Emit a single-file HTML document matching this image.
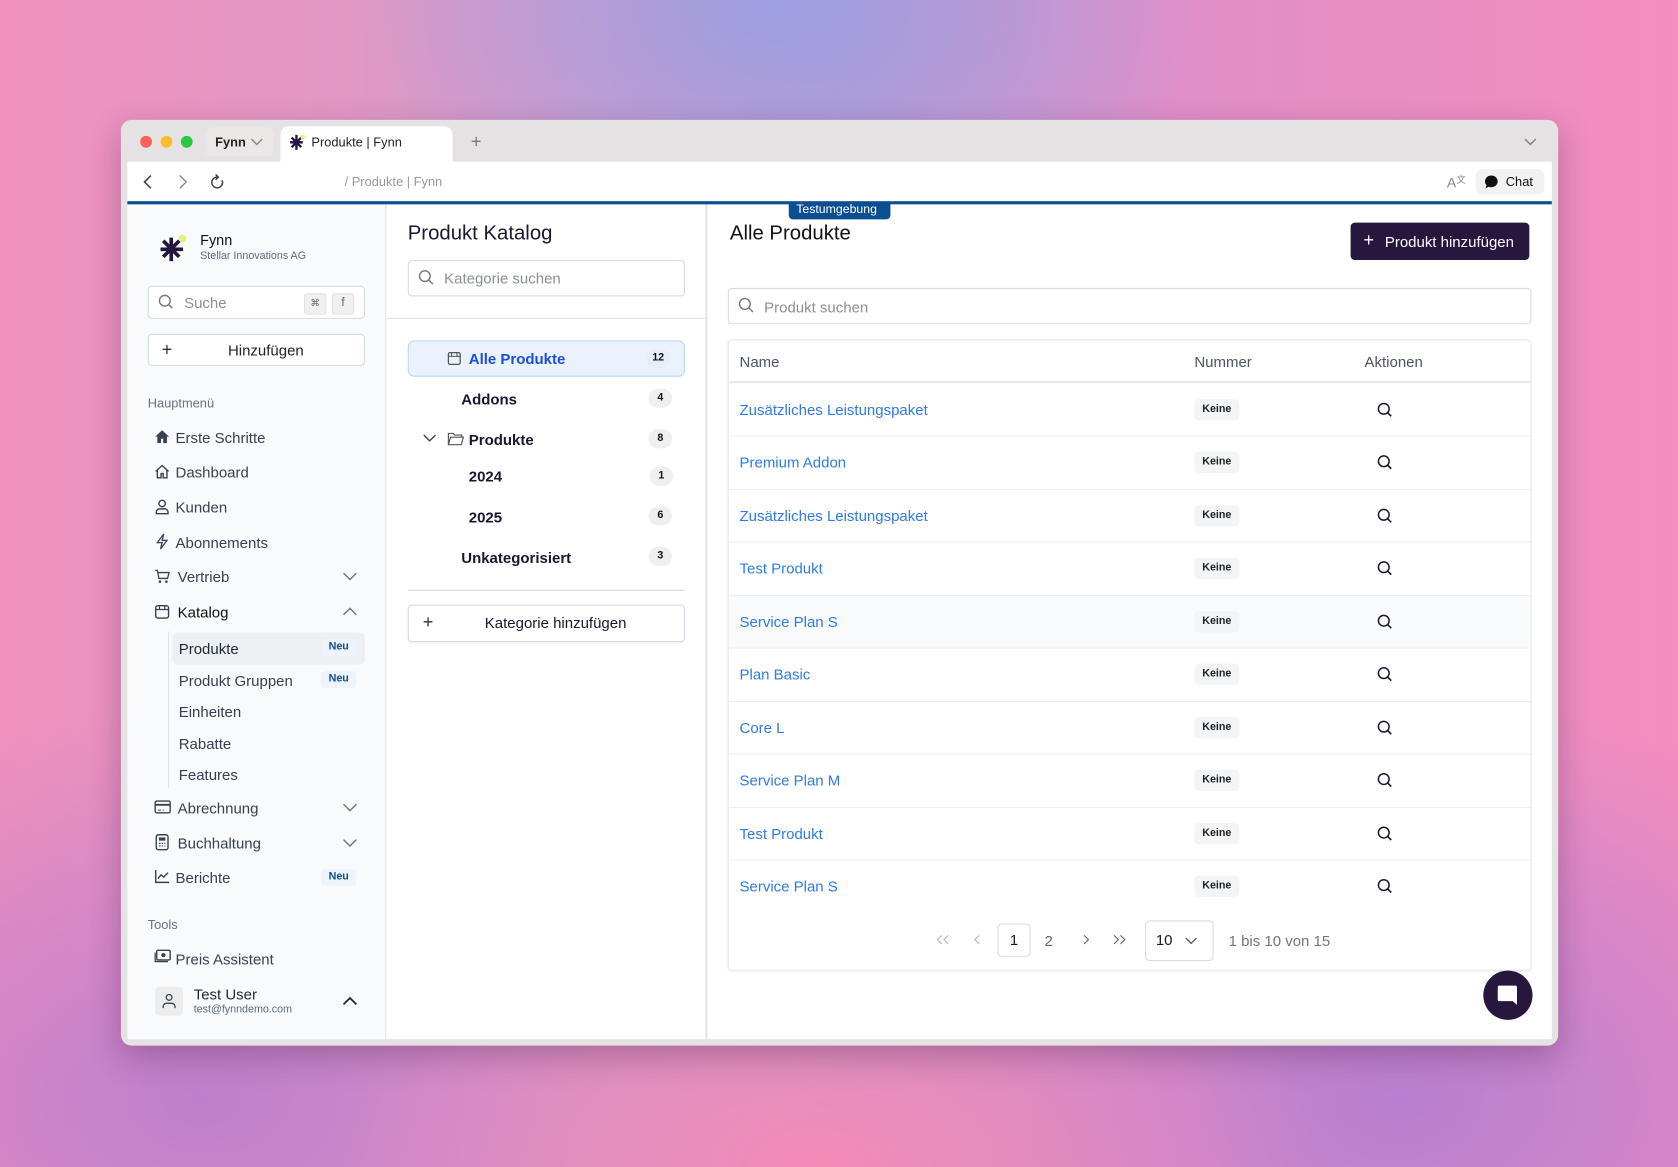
<!DOCTYPE html>
<html><head><meta charset="utf-8"><style>
*{box-sizing:border-box;margin:0;padding:0}
html,body{width:1678px;height:1167px;overflow:hidden}
body{font-family:"Liberation Sans",sans-serif;background:
radial-gradient(ellipse 420px 260px at 780px 10px,#9d9ee0 0%,rgba(157,158,224,0) 100%),
radial-gradient(ellipse 500px 300px at 820px 1167px,#f58ab5 0%,rgba(245,138,181,0) 100%),
radial-gradient(ellipse 600px 400px at 1400px 1100px,#b87fd0 0%,rgba(184,127,208,0) 100%),
radial-gradient(ellipse 600px 400px at 200px 1100px,#c07fcc 0%,rgba(192,127,204,0) 100%),
linear-gradient(90deg,#f291bd 0%,#d49ccb 35%,#c39ad3 50%,#e08fc8 70%,#f58dbf 100%);}
#s{position:absolute;left:0;top:0;width:1568px;height:1090px;transform:scale(1.0702);transform-origin:0 0}
.a{position:absolute}
.win{left:113px;top:112px;width:1343px;height:865px;background:#e4e2e3;border-radius:10px;box-shadow:0 10px 30px rgba(60,20,60,.3)}
.t{position:absolute;white-space:nowrap;line-height:1}
.side{left:119px;top:191px;width:242px;height:780px;background:#f9fafb;border-right:1px solid #dfe2e8}
.mid{left:361px;top:191px;width:299px;height:780px;background:#fff;border-right:1px solid #dfe2e8}
.main{left:661px;top:191px;width:789px;height:780px;background:#fff}
.mi{font-size:14px;color:#374151}
.neu{position:absolute;width:33px;height:16px;background:#eef4fd;color:#0b4f91;font-weight:bold;font-size:10px;text-align:center;line-height:16px;border-radius:4px}
.cnt{position:absolute;width:22px;height:18px;border-radius:9px;background:#efefef;font-size:10px;font-weight:bold;text-align:center;line-height:18px;color:#111}
.box{position:absolute;border:1px solid #d5dae3;border-radius:4px;background:#fff}
.lnk{font-size:14px;color:#2f7be5}
.kn{position:absolute;left:1116px;width:42px;height:20px;background:#f3f4f6;border-radius:4px;font-size:10px;font-weight:bold;text-align:center;line-height:20px;color:#222}
.row{position:absolute;left:681px;width:749px;height:1px;background:#eceef2}
svg{position:absolute}
</style></head><body><div id="s">
<div class="a win"></div>
<!-- tab bar -->
<div class="a" style="left:131px;top:127px;width:11px;height:11px;border-radius:50%;background:#fe5f57"></div>
<div class="a" style="left:150px;top:127px;width:11px;height:11px;border-radius:50%;background:#febc2e"></div>
<div class="a" style="left:169px;top:127px;width:11px;height:11px;border-radius:50%;background:#28c840"></div>
<div class="a" style="left:192px;top:119px;width:64px;height:27px;background:#ece7e6;border-radius:6px"></div>
<div class="t" style="left:201px;top:127px;font-size:12px;font-weight:bold;color:#222">Fynn</div>
<svg style="left:234px;top:128px" width="12" height="10"><path d="M1 2l5 5 5-5" stroke="#888" fill="none" stroke-width="1.3"/></svg>
<div class="a" style="left:262px;top:118px;width:161px;height:34px;background:#fff;border-radius:8px 8px 0 0"></div>
<svg style="left:270px;top:125px" width="16" height="16"><g stroke="#24173f" stroke-width="2.2"><path d="M7 1v14M1 8h12M2.5 3.5l9 9M11.5 3.5l-9 9"/></g><circle cx="13" cy="3" r="2.2" fill="#e6ef7a"/></svg>
<div class="t" style="left:291px;top:127px;font-size:12px;color:#222">Produkte | Fynn</div>
<div class="t" style="left:440px;top:124px;font-size:17px;color:#777">+</div>
<svg style="left:1424px;top:128px" width="12" height="9"><path d="M1 2l5 5 5-5" stroke="#777" fill="none" stroke-width="1.2"/></svg>
<!-- toolbar -->
<div class="a" style="left:119px;top:151px;width:1331px;height:37px;background:#fff"></div>
<svg style="left:132px;top:163px" width="12" height="14"><path d="M9 1L3 7l6 6" stroke="#444" fill="none" stroke-width="1.5"/></svg>
<svg style="left:165px;top:163px" width="12" height="14"><path d="M3 1l6 6-6 6" stroke="#888" fill="none" stroke-width="1.3"/></svg>
<svg style="left:196px;top:162px" width="15" height="16"><path d="M11.5 6.5A5 5 0 1 1 7 3.5" stroke="#444" fill="none" stroke-width="1.4"/><path d="M5.5 1l2.5 2.5-2.5 2.5" stroke="#444" fill="none" stroke-width="1.4"/></svg>
<div class="t" style="left:322px;top:164px;font-size:12px;color:#9a9a9a">/ Produkte | Fynn</div>
<div class="t" style="left:1352px;top:164px;font-size:13px;color:#888">A<span style="font-size:9px;vertical-align:top">文</span></div>
<div class="a" style="left:1379px;top:158px;width:64px;height:24px;background:#f2f2f2;border-radius:6px"></div>
<svg style="left:1387px;top:163px" width="14" height="14"><path d="M7 1a6 5.5 0 1 1-3 10.5L1 13l1-3A6 5.5 0 0 1 7 1z" fill="#111"/></svg>
<div class="t" style="left:1407px;top:164px;font-size:12px;color:#111">Chat</div>
<div class="a" style="left:119px;top:188px;width:1331px;height:3px;background:#0b4f91"></div>
<!-- panels -->
<div class="a side"></div>
<div class="a mid"></div>
<div class="a main"></div>
<div class="a" style="left:737px;top:189px;width:95px;height:16px;background:#0b4f91;border-radius:0 0 4px 4px"></div>
<div class="t" style="left:744px;top:191px;font-size:11.5px;color:#fff">Testumgebung</div>
<!-- sidebar -->
<svg style="left:148px;top:218px" width="28" height="28"><g stroke="#24173f" stroke-width="3.4"><path d="M12 4v22M2 15h21M4.5 7l15 15M19.5 7l-15 15"/></g><circle cx="22.5" cy="5" r="3.6" fill="#e6ef7a"/></svg>
<div class="t" style="left:187px;top:218px;font-size:13.5px;color:#111">Fynn</div>
<div class="t" style="left:187px;top:235px;font-size:10px;color:#5b6b86">Stellar Innovations AG</div>
<div class="box" style="left:138px;top:267px;width:203px;height:31px"></div>
<svg style="left:148px;top:275px" width="14" height="14"><circle cx="6" cy="6" r="5" stroke="#777" fill="none" stroke-width="1.3"/><path d="M9.5 9.5l3.5 3.5" stroke="#777" stroke-width="1.3"/></svg>
<div class="t" style="left:172px;top:276px;font-size:14px;color:#8a8f98">Suche</div>
<div class="a" style="left:284px;top:274px;width:21px;height:20px;background:#f0f0f0;border:1px solid #e2e2e2;border-radius:3px;font-size:9px;text-align:center;line-height:17px;color:#666">⌘</div>
<div class="a" style="left:310px;top:274px;width:21px;height:20px;background:#f0f0f0;border:1px solid #e2e2e2;border-radius:3px;font-size:11px;text-align:center;line-height:17px;color:#666">f</div>
<div class="box" style="left:138px;top:312px;width:203px;height:30px"></div>
<div class="t" style="left:151px;top:318px;font-size:17px;color:#333">+</div>
<div class="t" style="left:213px;top:320px;font-size:14px;color:#222">Hinzufügen</div>
<div class="t" style="left:138px;top:371px;font-size:12px;color:#6b7280">Hauptmenü</div>
<svg style="left:144px;top:401px" width="15" height="14"><path d="M7.5 1L1 7h2v6h3.5V9h2v4H12V7h2z" fill="#374151"/></svg>
<div class="t mi" style="left:164px;top:402px">Erste Schritte</div>
<svg style="left:144px;top:433px" width="15" height="15"><path d="M1.5 7.5L7.5 2l6 5.5M3 6v7.5h3.5v-4h2v4H12V6" stroke="#374151" fill="none" stroke-width="1.3"/></svg>
<div class="t mi" style="left:164px;top:434px">Dashboard</div>
<svg style="left:144px;top:466px" width="15" height="15"><circle cx="7.5" cy="4.5" r="3" stroke="#374151" fill="none" stroke-width="1.3"/><path d="M2 14v-1.5a3 3 0 0 1 3-3h5a3 3 0 0 1 3 3V14z" stroke="#374151" fill="none" stroke-width="1.3"/></svg>
<div class="t mi" style="left:164px;top:467px">Kunden</div>
<svg style="left:144px;top:498px" width="15" height="16"><path d="M9 1L3 9h4.5L6 15l6-8H7.5z" stroke="#374151" fill="none" stroke-width="1.2"/></svg>
<div class="t mi" style="left:164px;top:500px">Abonnements</div>
<svg style="left:144px;top:531px" width="15" height="15"><path d="M1 2h2l1.5 7.5h8L14 4H4" stroke="#374151" fill="none" stroke-width="1.2"/><circle cx="5.5" cy="12.5" r="1.2" fill="#374151"/><circle cx="11.5" cy="12.5" r="1.2" fill="#374151"/></svg>
<div class="t mi" style="left:166px;top:532px">Vertrieb</div>
<svg style="left:320px;top:534px" width="14" height="9"><path d="M1 1.5l6 6 6-6" stroke="#6b7280" fill="none" stroke-width="1.3"/></svg>
<svg style="left:144px;top:564px" width="15" height="15"><rect x="1.5" y="2" width="12" height="11.5" rx="2" stroke="#374151" fill="none" stroke-width="1.3"/><path d="M1.5 5.5h12M5 2v3.5M10 2v3.5" stroke="#374151" stroke-width="1.1"/></svg>
<div class="t mi" style="left:166px;top:565px;color:#111">Katalog</div>
<svg style="left:320px;top:567px" width="14" height="9"><path d="M1 7.5l6-6 6 6" stroke="#6b7280" fill="none" stroke-width="1.3"/></svg>
<div class="a" style="left:157px;top:590px;width:1px;height:146px;background:#dfe2e8"></div>
<div class="a" style="left:161px;top:591px;width:180px;height:30px;background:#eeeff2;border-radius:5px"></div>
<div class="t mi" style="left:167px;top:599px;color:#1f2937">Produkte</div>
<div class="neu" style="left:300px;top:597px">Neu</div>
<div class="t mi" style="left:167px;top:629px">Produkt Gruppen</div>
<div class="neu" style="left:300px;top:627px">Neu</div>
<div class="t mi" style="left:167px;top:658px">Einheiten</div>
<div class="t mi" style="left:167px;top:688px">Rabatte</div>
<div class="t mi" style="left:167px;top:717px">Features</div>
<svg style="left:144px;top:747px" width="16" height="14"><rect x="1" y="1.5" width="14" height="11" rx="1.5" stroke="#374151" fill="none" stroke-width="1.3"/><path d="M1 5h14" stroke="#374151" stroke-width="1.8"/><path d="M3.5 10h3M8 10h1" stroke="#374151" stroke-width="1"/></svg>
<div class="t mi" style="left:166px;top:748px">Abrechnung</div>
<svg style="left:320px;top:750px" width="14" height="9"><path d="M1 1.5l6 6 6-6" stroke="#6b7280" fill="none" stroke-width="1.3"/></svg>
<svg style="left:145px;top:779px" width="13" height="16"><rect x="1" y="1" width="11" height="14" rx="2" stroke="#374151" fill="none" stroke-width="1.3"/><rect x="3.5" y="3.5" width="6" height="3" fill="#374151"/><path d="M3.5 9h1.5M6 9h1.5M8.5 9h1M3.5 11.5h1.5M6 11.5h1.5M8.5 11.5h1" stroke="#374151"/></svg>
<div class="t mi" style="left:166px;top:781px">Buchhaltung</div>
<svg style="left:320px;top:783px" width="14" height="9"><path d="M1 1.5l6 6 6-6" stroke="#6b7280" fill="none" stroke-width="1.3"/></svg>
<svg style="left:144px;top:812px" width="15" height="14"><path d="M1.5 1v11.5H14" stroke="#374151" fill="none" stroke-width="1.3"/><path d="M3.5 9l3-3.5 2.5 2 4-4" stroke="#374151" fill="none" stroke-width="1.3"/></svg>
<div class="t mi" style="left:164px;top:813px">Berichte</div>
<div class="neu" style="left:300px;top:812px">Neu</div>
<div class="t" style="left:138px;top:858px;font-size:12px;color:#6b7280">Tools</div>
<svg style="left:144px;top:887px" width="16" height="13"><rect x="2.5" y="1" width="12.5" height="9" rx="1" stroke="#374151" fill="none" stroke-width="1.3"/><circle cx="8.7" cy="5.5" r="2" fill="#374151"/><path d="M1 3v8.5h12" stroke="#374151" fill="none" stroke-width="1.2"/></svg>
<div class="a" style="left:119px;top:887px;width:242px;height:17px;overflow:hidden"><div class="t mi" style="left:45px;top:2px">Preis Assistent</div></div>
<div class="a" style="left:145px;top:922px;width:26px;height:27px;background:#ececec;border-radius:4px"></div>
<svg style="left:150px;top:928px" width="16" height="15"><circle cx="8" cy="4" r="2.7" stroke="#374151" fill="none" stroke-width="1.2"/><path d="M2.5 14v-1.5a3 3 0 0 1 3-3h5a3 3 0 0 1 3 3V14" stroke="#374151" fill="none" stroke-width="1.2"/></svg>
<div class="t" style="left:181px;top:922px;font-size:14px;color:#1f2937">Test User</div>
<div class="t" style="left:181px;top:939px;font-size:10px;color:#5b6b86">test@fynndemo.com</div>
<svg style="left:320px;top:931px" width="14" height="9"><path d="M1 7.5l6-6 6 6" stroke="#222" fill="none" stroke-width="1.6"/></svg>
<!-- middle -->
<div class="t" style="left:381px;top:209px;font-size:19px;color:#1c1530">Produkt Katalog</div>
<div class="box" style="left:381px;top:243px;width:259px;height:34px"></div>
<svg style="left:391px;top:252px" width="15" height="15"><circle cx="6" cy="6" r="5" stroke="#777" fill="none" stroke-width="1.3"/><path d="M9.5 9.5l4 4" stroke="#777" stroke-width="1.3"/></svg>
<div class="t" style="left:415px;top:253px;font-size:14px;color:#8a8f98">Kategorie suchen</div>
<div class="a" style="left:361px;top:297px;width:299px;height:1px;background:#dfe2e8"></div>
<div class="a" style="left:381px;top:318px;width:259px;height:34px;background:#eaf2fd;border:1px solid #b9d3f5;border-radius:6px"></div>
<svg style="left:418px;top:328px" width="13" height="14"><rect x="1" y="1.5" width="11" height="11" rx="1.5" stroke="#555" fill="none" stroke-width="1.2"/><path d="M1 5h11M4 1.5V5M9 1.5V5" stroke="#555" stroke-width="1"/></svg>
<div class="t" style="left:438px;top:328px;font-size:14px;color:#1d4ed8;font-weight:bold">Alle Produkte</div>
<div class="cnt" style="left:604px;top:326px;background:#e8eef7">12</div>
<div class="t" style="left:431px;top:366px;font-size:14px;color:#1c1530;font-weight:bold">Addons</div>
<div class="cnt" style="left:606px;top:363px">4</div>
<svg style="left:395px;top:405px" width="13" height="9"><path d="M1 1.5l5.5 5.5 5.5-5.5" stroke="#444" fill="none" stroke-width="1.3"/></svg>
<svg style="left:418px;top:403px" width="16" height="14"><path d="M1 12.5V2h4.5l1.5 1.5h6.5v2M1 12.5l2-7h12l-2 7z" stroke="#555" fill="none" stroke-width="1.1"/></svg>
<div class="t" style="left:438px;top:404px;font-size:14px;color:#1c1530;font-weight:bold">Produkte</div>
<div class="cnt" style="left:606px;top:401px">8</div>
<div class="t" style="left:438px;top:438px;font-size:14px;color:#1c1530;font-weight:bold">2024</div>
<div class="cnt" style="left:607px;top:436px">1</div>
<div class="t" style="left:438px;top:476px;font-size:14px;color:#1c1530;font-weight:bold">2025</div>
<div class="cnt" style="left:606px;top:473px">6</div>
<div class="t" style="left:431px;top:514px;font-size:14px;color:#1c1530;font-weight:bold">Unkategorisiert</div>
<div class="cnt" style="left:606px;top:511px">3</div>
<div class="a" style="left:381px;top:551px;width:259px;height:1px;background:#cfd4dc"></div>
<div class="box" style="left:381px;top:565px;width:259px;height:35px;box-shadow:0 1px 2px rgba(0,0,0,.05)"></div>
<div class="t" style="left:395px;top:573px;font-size:17px;color:#333">+</div>
<div class="t" style="left:453px;top:575px;font-size:14px;color:#1c1530">Kategorie hinzufügen</div>
<!-- main -->
<div class="t" style="left:682px;top:209px;font-size:19px;color:#111">Alle Produkte</div>
<div class="a" style="left:1262px;top:208px;width:167px;height:35px;background:#27173f;border-radius:4px"></div>
<div class="t" style="left:1274px;top:216px;font-size:17px;color:#fff">+</div>
<div class="t" style="left:1294px;top:219px;font-size:14px;color:#fff">Produkt hinzufügen</div>
<div class="box" style="left:680px;top:269px;width:751px;height:34px"></div>
<svg style="left:690px;top:278px" width="15" height="15"><circle cx="6" cy="6" r="5" stroke="#777" fill="none" stroke-width="1.3"/><path d="M9.5 9.5l4 4" stroke="#777" stroke-width="1.3"/></svg>
<div class="t" style="left:714px;top:280px;font-size:14px;color:#8a8f98">Produkt suchen</div>
<div class="a" style="left:680px;top:317px;width:751px;height:590px;border:1px solid #e5e7eb;border-radius:4px;box-shadow:0 1px 2px rgba(0,0,0,.06)"></div>
<div class="t" style="left:691px;top:331px;font-size:14px;color:#4b5563">Name</div>
<div class="t" style="left:1116px;top:331px;font-size:14px;color:#4b5563">Nummer</div>
<div class="t" style="left:1275px;top:331px;font-size:14px;color:#4b5563">Aktionen</div>
<div class="a" style="left:681px;top:356px;width:749px;height:2px;background:#e6e8ec"></div>
<div class="a" style="left:681px;top:556px;width:749px;height:49px;background:#f9fafb"></div>
<div class="row" style="top:407px"></div><div class="row" style="top:457px"></div><div class="row" style="top:506px"></div><div class="row" style="top:556px"></div><div class="row" style="top:605px"></div><div class="row" style="top:655px"></div><div class="row" style="top:704px"></div><div class="row" style="top:754px"></div><div class="row" style="top:803px"></div>
<div class="t lnk" style="left:691px;top:376px">Zusätzliches Leistungspaket</div>
<div class="t lnk" style="left:691px;top:425px">Premium Addon</div>
<div class="t lnk" style="left:691px;top:475px">Zusätzliches Leistungspaket</div>
<div class="t lnk" style="left:691px;top:524px">Test Produkt</div>
<div class="t lnk" style="left:691px;top:574px">Service Plan S</div>
<div class="t lnk" style="left:691px;top:623px">Plan Basic</div>
<div class="t lnk" style="left:691px;top:673px">Core L</div>
<div class="t lnk" style="left:691px;top:722px">Service Plan M</div>
<div class="t lnk" style="left:691px;top:772px">Test Produkt</div>
<div class="t lnk" style="left:691px;top:821px">Service Plan S</div>
<div class="kn" style="top:373px">Keine</div><div class="kn" style="top:422px">Keine</div><div class="kn" style="top:472px">Keine</div><div class="kn" style="top:521px">Keine</div><div class="kn" style="top:571px">Keine</div><div class="kn" style="top:620px">Keine</div><div class="kn" style="top:670px">Keine</div><div class="kn" style="top:719px">Keine</div><div class="kn" style="top:769px">Keine</div><div class="kn" style="top:818px">Keine</div>
<svg width="0" height="0"><defs><g id="mg"><circle cx="6" cy="6" r="5" stroke="#1c1530" fill="none" stroke-width="1.4"/><path d="M9.5 9.5l3.5 3.5" stroke="#1c1530" stroke-width="1.5"/></g></defs></svg>
<svg style="left:1287px;top:376px" width="14" height="14"><use href="#mg"/></svg>
<svg style="left:1287px;top:425px" width="14" height="14"><use href="#mg"/></svg>
<svg style="left:1287px;top:475px" width="14" height="14"><use href="#mg"/></svg>
<svg style="left:1287px;top:524px" width="14" height="14"><use href="#mg"/></svg>
<svg style="left:1287px;top:574px" width="14" height="14"><use href="#mg"/></svg>
<svg style="left:1287px;top:623px" width="14" height="14"><use href="#mg"/></svg>
<svg style="left:1287px;top:673px" width="14" height="14"><use href="#mg"/></svg>
<svg style="left:1287px;top:722px" width="14" height="14"><use href="#mg"/></svg>
<svg style="left:1287px;top:772px" width="14" height="14"><use href="#mg"/></svg>
<svg style="left:1287px;top:821px" width="14" height="14"><use href="#mg"/></svg>
<!-- pagination -->
<svg style="left:875px;top:873px" width="13" height="10"><path d="M5 1L1 5l4 4M11 1L7 5l4 4" stroke="#bbb" fill="none" stroke-width="1.1"/></svg>
<svg style="left:910px;top:873px" width="7" height="10"><path d="M5 1L1 5l4 4" stroke="#bbb" fill="none" stroke-width="1.1"/></svg>
<div class="a" style="left:932px;top:863px;width:31px;height:31px;border:1px solid #d5dae3;border-radius:4px;font-size:14px;color:#1c1530;text-align:center;line-height:29px">1</div>
<div class="t" style="left:976px;top:872px;font-size:14px;color:#666">2</div>
<svg style="left:1011px;top:873px" width="7" height="10"><path d="M2 1l4 4-4 4" stroke="#666" fill="none" stroke-width="1.1"/></svg>
<svg style="left:1040px;top:873px" width="13" height="10"><path d="M1 1l4 4-4 4M7 1l4 4-4 4" stroke="#666" fill="none" stroke-width="1.1"/></svg>
<div class="a" style="left:1070px;top:860px;width:64px;height:38px;border:1px solid #d5dae3;border-radius:4px"></div>
<div class="t" style="left:1080px;top:871px;font-size:14px;color:#1c1530">10</div>
<svg style="left:1107px;top:875px" width="12" height="8"><path d="M1 1.5l5 5 5-5" stroke="#555" fill="none" stroke-width="1.2"/></svg>
<div class="t" style="left:1148px;top:872px;font-size:14px;color:#777">1 bis 10 von 15</div>
<div class="a" style="left:1386px;top:907px;width:46px;height:46px;border-radius:50%;background:#27173f"></div>
<svg style="left:1398px;top:919px" width="22" height="22"><path d="M3 2h15a1.5 1.5 0 0 1 1.5 1.5V20l-4-3.5H3A1.5 1.5 0 0 1 1.5 15V3.5A1.5 1.5 0 0 1 3 2z" fill="#fff"/></svg>
</div></body></html>
